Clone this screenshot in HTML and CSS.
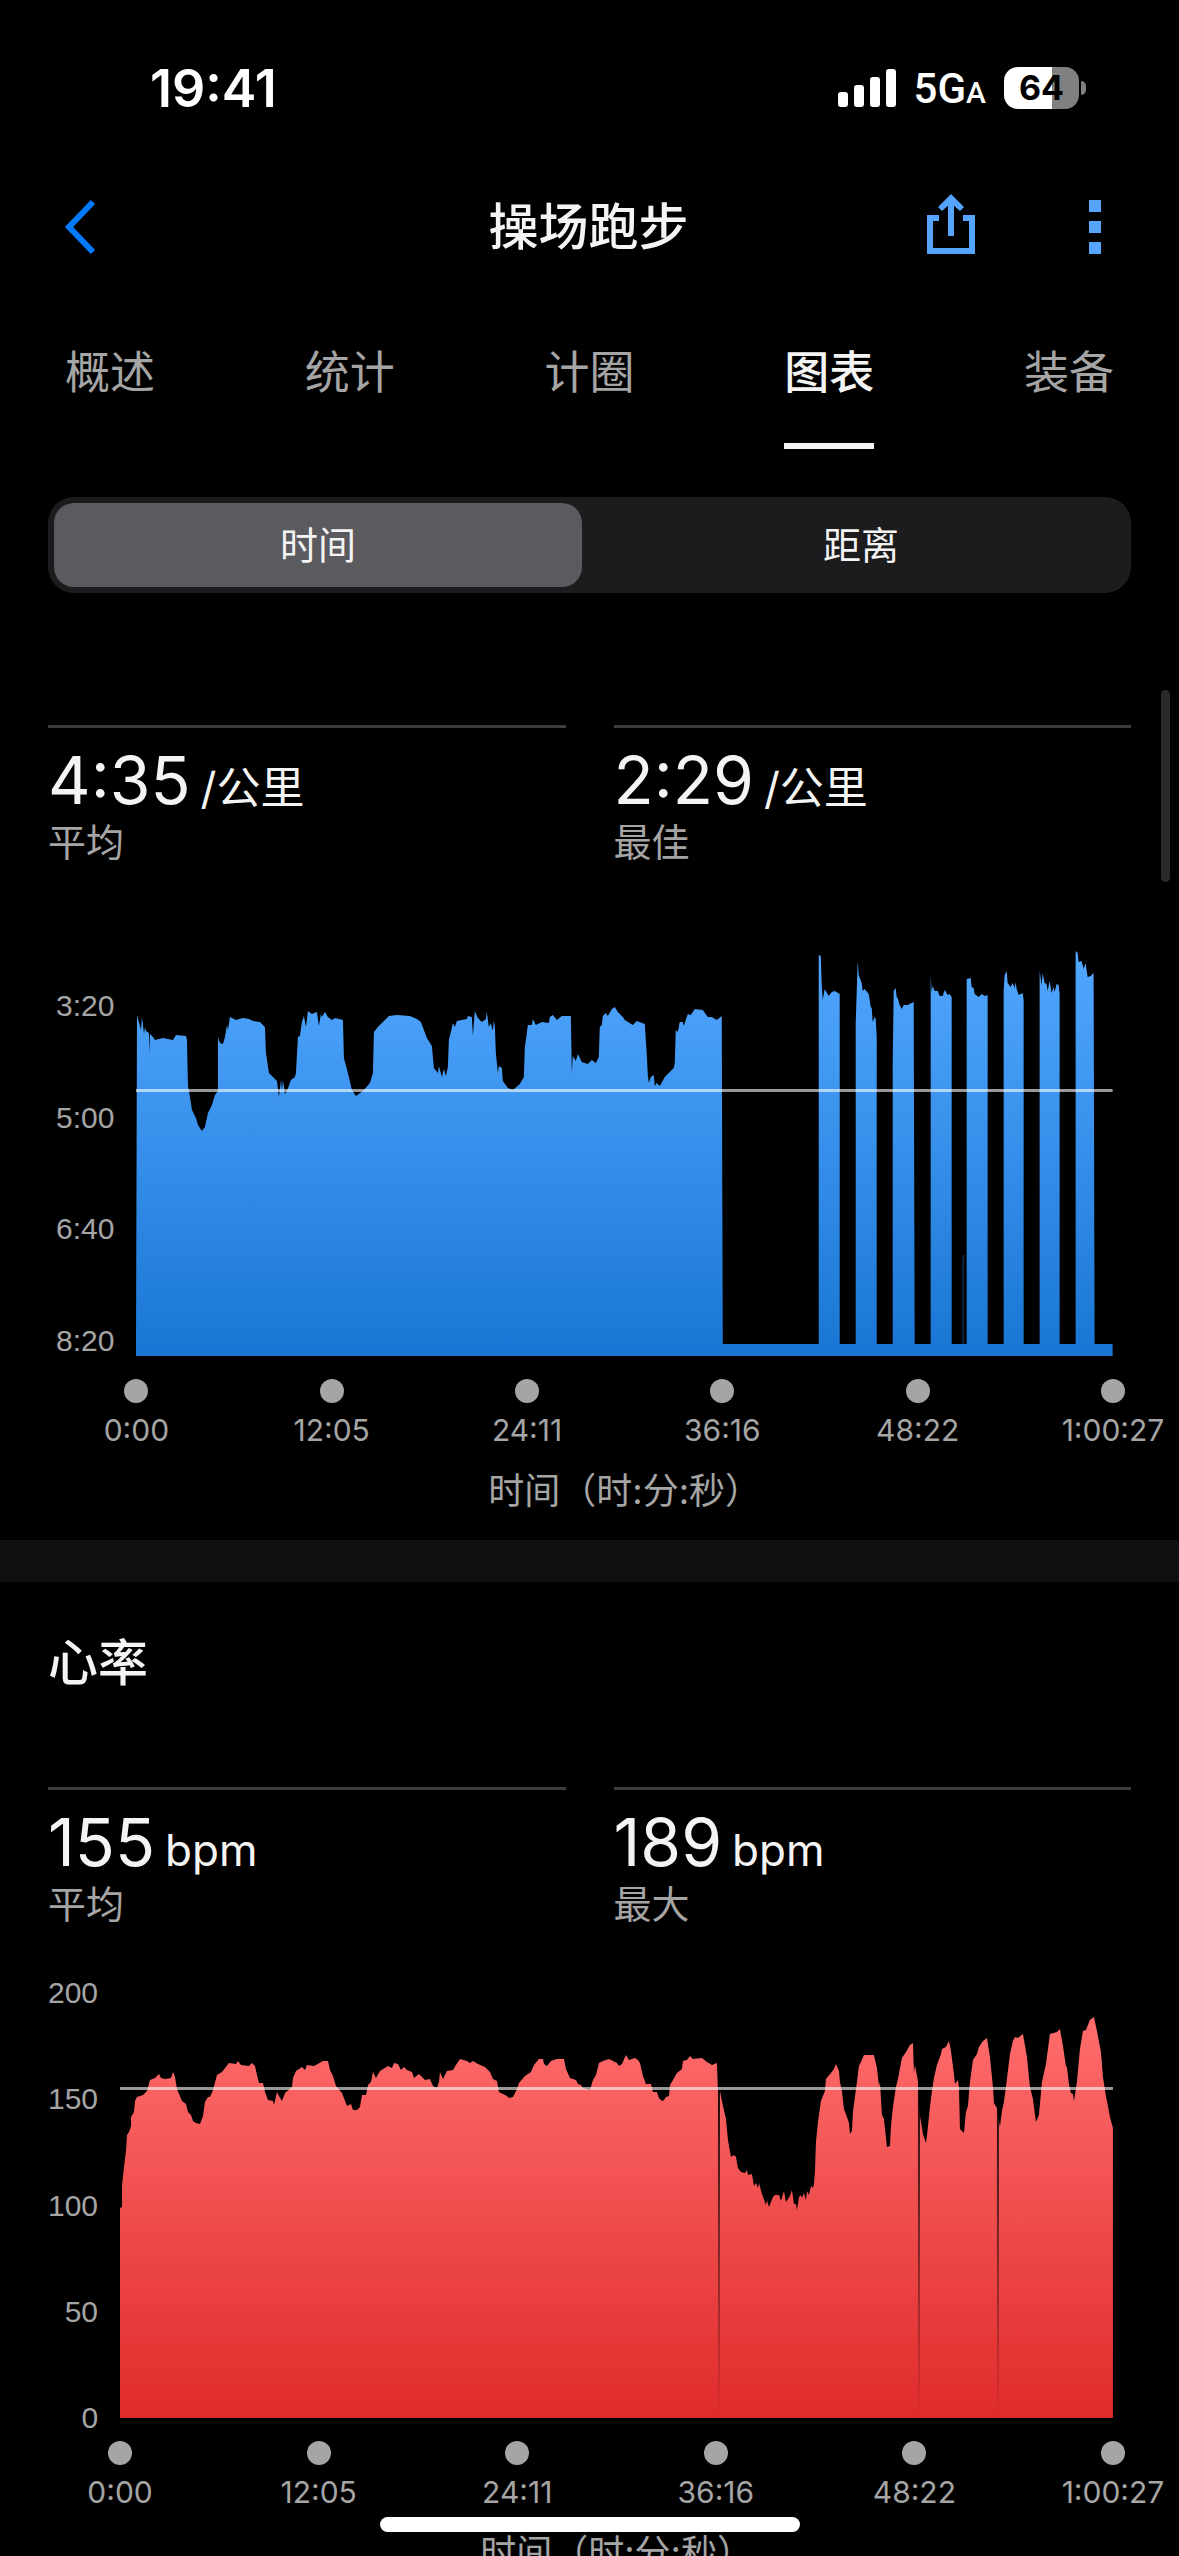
FILE: index.html
```
<!DOCTYPE html>
<html lang="zh-CN">
  <head>
    <meta charset="UTF-8" />
    <meta name="viewport" content="width=device-width, initial-scale=1.0" />
    <title>操场跑步</title>
    <link rel="stylesheet" href="styles.css">
  </head>
  <body>
    <div class="screen">
      <div class="status-bar">
        <span class="clock">19:41</span>
        <div class="status-icons">
          <svg class="signal" width="58" height="38" viewBox="0 0 58 38" fill="#fff">
            <rect x="0" y="23" width="10" height="15" rx="3" />
            <rect x="16" y="16" width="10" height="22" rx="3" />
            <rect x="32" y="8" width="10" height="30" rx="3" />
            <rect x="48" y="0" width="10" height="38" rx="3" />
          </svg>
          <span class="network">5G<small>A</small></span>
          <span class="battery">64</span>
        </div>
      </div>

      <header class="nav">
        <a class="icon-link" href="#" aria-label="返回">
          <svg width="32" height="56" viewBox="0 0 32 56" fill="none" stroke="#007aff" stroke-width="6">
            <path d="M29 3L5 28L29 53" />
          </svg>
        </a>
        <h1>操场跑步</h1>
        <div class="nav-actions">
          <button type="button" class="icon-button" aria-label="分享">
            <svg width="48" height="60" viewBox="0 0 48 60" fill="none" stroke="#55a5ff" stroke-width="6">
              <path d="M12 24H3V57H45V24H36" />
              <path d="M24 42V6" />
              <path d="M24 0L37 13L33 17L24 9L15 17L11 13Z" fill="#55a5ff" stroke="none" />
            </svg>
          </button>
          <button type="button" class="icon-button" aria-label="更多">
            <svg width="12" height="54" viewBox="0 0 12 54" fill="#55a5ff">
              <rect width="12" height="12" />
              <rect y="21" width="12" height="12" />
              <rect y="42" width="12" height="12" />
            </svg>
          </button>
        </div>
      </header>

      <nav class="tabs">
        <a href="#">概述</a>
        <a href="#">统计</a>
        <a href="#">计圈</a>
        <a href="#" class="active">图表</a>
        <a href="#">装备</a>
      </nav>

      <form class="segmented">
        <input type="radio" id="byTime" name="axis" checked />
        <label for="byTime">时间</label>
        <input type="radio" id="byDistance" name="axis" />
        <label for="byDistance">距离</label>
      </form>

      <main>
        <section class="card pace">
          <div class="stats">
            <div class="stat">
              <p class="value">4:35 <span class="unit">/公里</span></p>
              <p class="caption">平均</p>
            </div>
            <div class="stat">
              <p class="value">2:29 <span class="unit">/公里</span></p>
              <p class="caption">最佳</p>
            </div>
          </div>

          <div class="chart">
            <div class="y-axis">
              <span>3:20</span>
              <span>5:00</span>
              <span>6:40</span>
              <span>8:20</span>
            </div>
            <svg class="plot" viewBox="136 940 977 416" preserveAspectRatio="none">
              <defs>
                <linearGradient id="paceFill" x1="0" y1="0" x2="0" y2="1">
                  <stop offset="0" stop-color="#52a7ff" />
                  <stop offset="1" stop-color="#1976d4" />
                </linearGradient>
              </defs>
              <polygon fill="url(#paceFill)" points="136,1356 136,1344 137,1015 138,1019 140,1026 141,1030 142,1017 144,1034 145,1027 146,1031 149,1033 149,1054 150,1034 153,1037 155,1040 163,1038 173,1040 176,1035 186,1036 187,1040 188,1086 190,1097 192,1110 196,1118 198,1125 202,1131 205,1127 208,1113 212,1105 215,1095 218,1091
                218,1037 220,1043 223,1044 225,1037 227,1025 228,1030 230,1017 236,1020 243,1018 249,1019 253,1021 260,1022 265,1027 266,1053 269,1073 273,1077 277,1081 279,1097 281,1080 282,1090 283,1080 285,1094 287,1091 291,1080 295,1077 296,1073
                298,1037 300,1036 302,1022 304,1016 306,1027 308,1011 312,1014 317,1012 319,1026 321,1014 322,1017 325,1012 328,1017 332,1020 335,1018 343,1020 344,1058 348,1073 352,1090 356,1096 363,1091 370,1083 373,1073
                374,1032 378,1027 385,1020 389,1016 397,1015 410,1016 417,1019 421,1022 424,1030 427,1038 432,1046 434,1068 438,1073 439,1066 442,1077 444,1069 446,1076 448,1067
                449,1040 451,1032 453,1023 455,1027 457,1021 467,1019 468,1016 472,1017 473,1036 475,1011 478,1018 482,1022 486,1019 487,1012 489,1027 491,1023 493,1031 494,1020 495,1027 496,1053 498,1073 499,1066 502,1068 503,1081 508,1088 513,1090 520,1084 524,1077
                525,1047 527,1033 528,1025 532,1025 533,1019 536,1025 542,1022 549,1023 550,1017 553,1015 557,1020 562,1016 571,1016 572,1073 573,1056 576,1061 578,1054 582,1062 588,1064 592,1060 596,1063 599,1057
                600,1027 602,1025 603,1016 606,1013 608,1016 612,1009 615,1007 618,1012 623,1017 625,1020 633,1025 637,1021 645,1024 647,1055 648,1075 649,1083 651,1077 654,1075 655,1086 657,1083 660,1086 665,1077 674,1068 675,1063
                676,1030 678,1032 680,1022 683,1022 684,1026 688,1014 691,1015 695,1009 703,1010 708,1017 712,1017 717,1020 722,1016 723,1344
                819,1344 819,955 821,956 822,985 823,1000 825,989 829,996 832,992 835,991 840,994 840,1344
                856,1344 856,1023 858,961 859,975 862,983 863,991 865,989 869,994 871,1007 872,1008 873,1022 875,1017 876,1019 877,1036 877,1344
                893,1344 893,1063 894,991 896,988 897,997 898,998 900,1005 902,1009 904,1005 908,1005 912,1003 914,1002 915,1344
                931,1344 931,975 932,992 933,986 935,991 938,991 940,996 943,996 945,990 948,995 950,994 952,997 952,1344
                967,1344 967,979 971,978 972,987 974,988 975,994 979,997 982,994 985,996 988,995 988,1344
                1004,1344 1004,990 1005,975 1007,971 1008,983 1011,987 1013,983 1015,988 1016,982 1017,989 1019,995 1023,993 1024,1000 1024,1344
                1040,1344 1040,971 1042,985 1043,973 1045,983 1047,984 1048,991 1050,981 1052,993 1054,987 1055,992 1057,984 1059,985 1060,994 1060,1344
                1076,1344 1076,951 1078,953 1079,962 1082,961 1084,969 1086,963 1088,977 1091,976 1094,973 1095,1344 1113,1344 1113,1356" />
              <rect x="963" y="1255" width="1" height="90" fill="#1c6fc4" opacity="0.6" />
              <rect class="average" x="136" y="1089" width="977" height="3" />
            </svg>
            <div class="x-axis">
              <span>0:00</span>
              <span>12:05</span>
              <span>24:11</span>
              <span>36:16</span>
              <span>48:22</span>
              <span>1:00:27</span>
            </div>
            <p class="axis-title">时间（时:分:秒）</p>
          </div>
        </section>

        <section class="card heart-rate">
          <h2>心率</h2>
          <div class="stats">
            <div class="stat">
              <p class="value">155 <span class="unit">bpm</span></p>
              <p class="caption">平均</p>
            </div>
            <div class="stat">
              <p class="value">189 <span class="unit">bpm</span></p>
              <p class="caption">最大</p>
            </div>
          </div>

          <div class="chart">
            <div class="y-axis">
              <span>200</span>
              <span>150</span>
              <span>100</span>
              <span>50</span>
              <span>0</span>
            </div>
            <svg class="plot" viewBox="120 1979 993 440" preserveAspectRatio="none">
              <defs>
                <linearGradient id="heartFill" x1="0" y1="0" x2="0" y2="1">
                  <stop offset="0" stop-color="#ff6d6d" />
                  <stop offset="1" stop-color="#e02b2b" />
                </linearGradient>
                <linearGradient id="dropFill" x1="0" y1="0" x2="0" y2="1">
                  <stop offset="0" stop-color="#000" />
                  <stop offset="1" stop-color="#000" stop-opacity="0" />
                </linearGradient>
              </defs>
              <polygon fill="url(#heartFill)" points="120,2419 120,2209 122,2208 122,2187 124,2168 126,2152 127,2136 129,2133 131,2127 131,2118 134,2113 135,2102 137,2098 143,2096 147,2092 150,2081 155,2079 159,2075 161,2079 165,2080 171,2079 173,2073 175,2078 177,2090 182,2102 186,2105 188,2113 191,2116 193,2122 196,2124 200,2125 203,2117 205,2103 208,2098 210,2098 213,2091
                217,2076 222,2073 229,2064 236,2065 238,2062 241,2066 249,2067 252,2064 255,2067 257,2076 259,2084 263,2084 265,2093 268,2101 273,2102 274,2106 277,2093 279,2097 282,2102 285,2094 292,2088
                293,2079 296,2072 302,2068 305,2071 307,2066 314,2067 323,2062 328,2062 330,2071 333,2077 336,2087 342,2094 347,2107 351,2105 353,2111 357,2111 360,2108 362,2096 366,2096 368,2086
                371,2083 373,2073 376,2079 380,2072 388,2067 392,2069 394,2064 398,2065 401,2071 404,2068 407,2071 412,2073 414,2079 419,2075 425,2081 430,2080 433,2087 437,2089 439,2083
                440,2073 443,2080 447,2072 453,2071 456,2066 460,2060 467,2062 470,2064 473,2062 478,2065 485,2068 490,2073 493,2080 497,2082 499,2093 507,2097 509,2099 513,2098 517,2090
                519,2084 525,2077 531,2073 534,2066 539,2060 543,2060 544,2065 547,2067 551,2062 557,2060 564,2060 566,2070 570,2079 576,2081 578,2085 581,2086 583,2089 590,2091
                593,2081 596,2076 599,2064 603,2062 609,2060 617,2064 619,2067 622,2065 626,2056 629,2061 635,2059 638,2061 640,2064 643,2077 646,2085 651,2085 653,2093 657,2093 659,2099 662,2102 664,2101 666,2098 669,2097
                670,2086 673,2081 677,2074 682,2070 683,2062 687,2061 690,2057 693,2060 702,2059 707,2063 712,2066 717,2064 718,2092 720,2092 723,2107 726,2120 728,2141 731,2158 734,2156 736,2158 738,2169 741,2173 745,2174 747,2171 748,2176 752,2175 753,2181 754,2187 756,2184 758,2189 759,2184 762,2195 766,2206 767,2201 769,2208
                773,2198 775,2196 779,2196 781,2202 784,2192 786,2203 790,2197 792,2191 794,2205 796,2205 797,2211 799,2198 801,2196 802,2199 804,2194 806,2201 807,2192 809,2196 811,2187 813,2189
                814,2185 815,2172 816,2143 818,2123 821,2102 825,2092 826,2080 831,2074 834,2070 836,2065 839,2072 840,2083 842,2092 844,2110 847,2118 849,2124 850,2135 852,2132 853,2113
                856,2090 857,2083 859,2067 861,2063 864,2056 874,2056 877,2069 879,2087 880,2083 882,2116 884,2120 887,2148 890,2147 891,2127 893,2108 896,2088 898,2080 902,2059 906,2053 910,2046 913,2044 914,2074 915,2066 918,2082
                920,2117 923,2135 926,2144 927,2137 930,2108 932,2092 934,2079 937,2066 941,2055 942,2050 946,2048 949,2042 951,2052 954,2075 955,2085 958,2081 959,2088 960,2130 964,2134 966,2113 968,2107
                970,2083 973,2061 977,2055 979,2048 983,2042 987,2039 990,2058 993,2088 994,2104 997,2109 999,2122 1000,2128 1002,2112 1004,2103 1007,2080 1010,2055 1013,2042 1015,2038 1018,2039 1023,2035 1027,2058 1030,2088 1033,2100 1036,2123 1039,2116
                1042,2083 1046,2065 1050,2035 1057,2033 1060,2030 1063,2047 1066,2067 1067,2068 1069,2085 1071,2094 1073,2095 1074,2102 1077,2083 1080,2050 1083,2032 1086,2031 1090,2021 1094,2018 1097,2032 1101,2053 1103,2078 1106,2097 1108,2107 1110,2118 1113,2129 1113,2419" />
              <rect x="718" y="2060" width="2" height="359" fill="url(#dropFill)" />
              <rect x="918" y="2060" width="2" height="359" fill="url(#dropFill)" />
              <rect x="997" y="2060" width="2" height="359" fill="url(#dropFill)" />
              <rect class="average" x="120" y="2088" width="993" height="3" />
            </svg>
            <div class="x-axis">
              <span>0:00</span>
              <span>12:05</span>
              <span>24:11</span>
              <span>36:16</span>
              <span>48:22</span>
              <span>1:00:27</span>
            </div>
            <p class="axis-title">时间（时:分:秒）</p>
          </div>
        </section>
      </main>

      <div class="scroll-thumb"></div>
      <div class="home-indicator"></div>
    </div>
  </body>
</html>
```
FILE: styles.css
```
* {
  box-sizing: border-box;
}

body {
  font-family: Inter, "Noto Sans CJK SC", sans-serif;
  background-color: #000;
  color: #f4f4f4;
  margin: 0;
}

h1,
h2,
p {
  margin: 0;
}

a {
  color: inherit;
  text-decoration: none;
}

.screen {
  position: relative;
  height: 100vh;
  overflow: hidden;
}

/* status bar */
.status-bar {
  display: flex;
  justify-content: space-between;
  align-items: center;
  height: 176px;
  padding: 0 100px 0 150px;
  color: #fff;
}

.clock {
  font-size: 52px;
  font-weight: 600;
}

.status-icons {
  display: flex;
  align-items: center;
  gap: 18px;
}

.network {
  font-family: Roboto, sans-serif;
  font-size: 42px;
  font-weight: 500;
}

.network small {
  font-size: 30px;
}

.battery {
  position: relative;
  width: 75px;
  height: 42px;
  border-radius: 14px;
  background: linear-gradient(to right, #fff 64%, #808080 64%);
  color: #000;
  font-size: 34px;
  font-weight: 700;
  line-height: 42px;
  text-align: center;
}

.battery::after {
  content: "";
  position: absolute;
  top: 14px;
  right: -7px;
  width: 5px;
  height: 14px;
  border-radius: 0 5px 5px 0;
  background-color: #808080;
}

/* title bar */
.nav {
  display: grid;
  grid-template-columns: 1fr auto 1fr;
  align-items: center;
  height: 102px;
  padding: 0 78px 0 64px;
}

h1,
h2 {
  font-size: 50px;
  font-weight: 500;
  line-height: 72px;
}

.nav h1 {
  padding-left: 12px;
}

.icon-link {
  display: flex;
}

.nav-actions {
  display: flex;
  justify-content: flex-end;
  align-items: flex-end;
  gap: 114px;
  padding-bottom: 6px;
}

.icon-button {
  display: flex;
  padding: 0;
  border: none;
  background: none;
  cursor: pointer;
}

/* tabs */
.tabs {
  display: flex;
  justify-content: space-between;
  padding: 65px 65px 0;
}

.tabs a {
  padding-bottom: 40px;
  border-bottom: 6px solid transparent;
  color: #a5a5a5;
  font-size: 45px;
  line-height: 60px;
}

.tabs .active {
  border-color: #f4f4f4;
  color: #f4f4f4;
  font-weight: 500;
}

.segmented {
  display: flex;
  gap: 15px;
  margin: 48px 48px 0;
  padding: 6px;
  border-radius: 26px;
  background-color: #1c1c1e;
}

.segmented input {
  position: absolute;
  opacity: 0;
}

.segmented label {
  flex: 1;
  border-radius: 20px;
  font-size: 38px;
  line-height: 84px;
  text-align: center;
  cursor: pointer;
}

.segmented input:checked + label {
  background-color: #5b5b5f;
}

/* chart cards */
.pace {
  padding-top: 132px;
  padding-bottom: 24px;
}

.heart-rate {
  border-top: 42px solid #101010;
}

.heart-rate h2 {
  padding: 45px 48px 88px;
}

.stats {
  display: grid;
  grid-template-columns: 1fr 1fr;
  gap: 48px;
  padding: 0 48px;
}

.stat {
  border-top: 3px solid #3c3c3c;
  padding-top: 16px;
}

.value {
  display: flex;
  align-items: baseline;
  gap: 10px;
  height: 74px;
  font-size: 66px;
  line-height: 72px;
}

.unit {
  font-size: 44px;
  line-height: 48px;
}

.caption {
  color: #a5a5a5;
  font-size: 38px;
  line-height: 48px;
}

.chart {
  display: grid;
  grid-template-columns: auto 1fr;
  column-gap: 22px;
  padding: 74px 66px 0 48px;
}

.y-axis {
  display: flex;
  flex-direction: column;
  justify-content: space-between;
  color: #a5a5a5;
  font-family: "Liberation Sans", sans-serif;
  font-size: 30px;
  line-height: 30px;
  text-align: right;
}

.pace .y-axis {
  padding: 51px 0 0 8px;
}

.heart-rate .y-axis {
  margin-bottom: -15px;
}

.heart-rate .chart {
  padding-top: 50px;
}

.plot {
  display: block;
  width: 100%;
  height: 416px;
}

.heart-rate .plot {
  height: 440px;
}

.average {
  fill: #fff;
  opacity: 0.6;
}

.x-axis {
  grid-column: 2;
  display: flex;
  justify-content: space-between;
  padding-top: 23px;
  color: #a5a5a5;
  font-size: 30px;
  line-height: 36px;
}

/* zero width keeps each label centred on its dot */
.x-axis span {
  display: flex;
  flex-direction: column;
  align-items: center;
  gap: 9px;
  width: 0;
  white-space: nowrap;
}

.x-axis span::before {
  content: "";
  width: 24px;
  height: 24px;
  border-radius: 50%;
  background-color: #a5a5a5;
}

.axis-title {
  grid-column: 2;
  padding-top: 18px;
  color: #a5a5a5;
  font-size: 36px;
  line-height: 50px;
  text-align: center;
}

.scroll-thumb {
  position: absolute;
  top: 690px;
  right: 9px;
  width: 9px;
  height: 192px;
  border-radius: 5px;
  background-color: #2a2a2a;
}

.home-indicator {
  position: absolute;
  bottom: 24px;
  left: 50%;
  width: 420px;
  height: 15px;
  margin-left: -210px;
  border-radius: 8px;
  background-color: #fff;
}
```
